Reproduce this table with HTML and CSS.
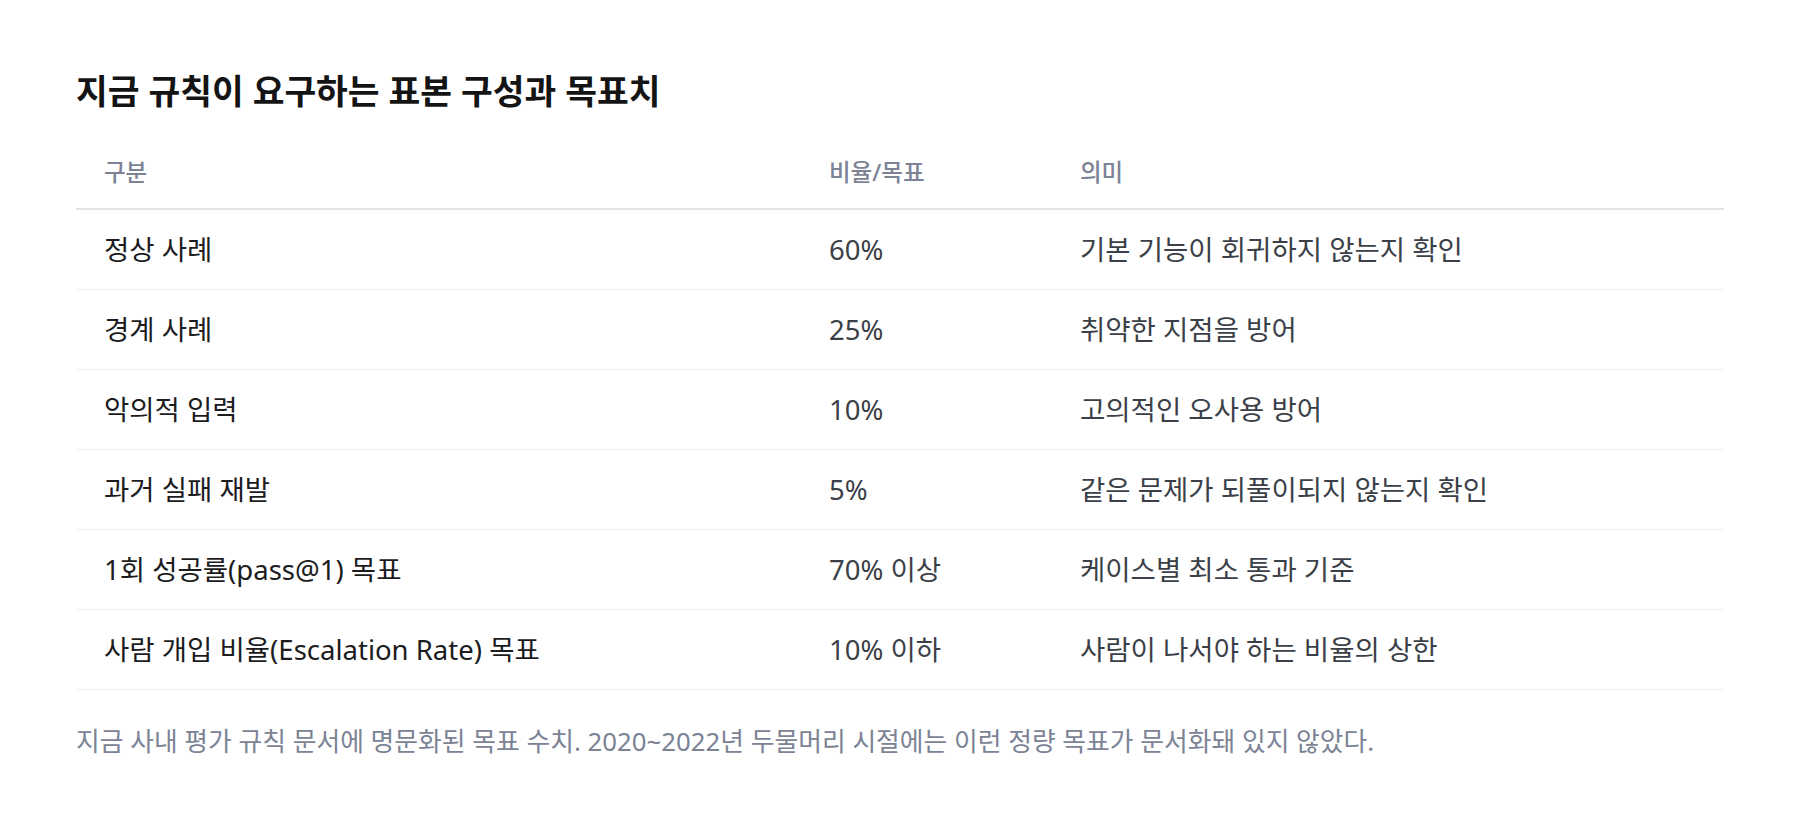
FILE: index.html
```html
<!DOCTYPE html>
<html lang="ko">
<head>
    <meta charset="UTF-8">
    <title>표본 구성과 목표치</title>
    <link rel="stylesheet" href="styles.css">
</head>
<body>
<div class="section">

    <h2 class="section-title">지금 규칙이 요구하는 표본 구성과 목표치</h2>

    <table class="grid">
        <thead>
            <tr>
                <th class="col-kind">구분</th>
                <th class="col-rate">비율/목표</th>
                <th class="col-mean">의미</th>
            </tr>
        </thead>
        <tbody>
            <tr>
                <td class="kind">정상 사례</td>
                <td class="rate">60%</td>
                <td class="mean">기본 기능이 회귀하지 않는지 확인</td>
            </tr>
            <tr>
                <td class="kind">경계 사례</td>
                <td class="rate">25%</td>
                <td class="mean">취약한 지점을 방어</td>
            </tr>
            <tr>
                <td class="kind">악의적 입력</td>
                <td class="rate">10%</td>
                <td class="mean">고의적인 오사용 방어</td>
            </tr>
            <tr>
                <td class="kind">과거 실패 재발</td>
                <td class="rate">5%</td>
                <td class="mean">같은 문제가 되풀이되지 않는지 확인</td>
            </tr>
            <tr>
                <td class="kind">1회 성공률(pass@1) 목표</td>
                <td class="rate">70% 이상</td>
                <td class="mean">케이스별 최소 통과 기준</td>
            </tr>
            <tr>
                <td class="kind">사람 개입 비율(Escalation Rate) 목표</td>
                <td class="rate">10% 이하</td>
                <td class="mean">사람이 나서야 하는 비율의 상한</td>
            </tr>
        </tbody>
    </table>

    <p class="caption">지금 사내 평가 규칙 문서에 명문화된 목표 수치. 2020~2022년 두물머리 시절에는 이런 정량 목표가 문서화돼 있지 않았다.</p>

</div>
</body>
</html>
```

FILE: styles.css
```css
body
{
    margin: 0;
    background: #ffffff;
    color: #1c1c1e;
    font-family: "Noto Sans", "Noto Sans CJK KR", sans-serif;
}

.section
{
    padding: 70px 76px 40px 76px;
}

.section-title
{
    margin: 0 0 23px 0;
    font-size: 34.5px;
    line-height: 42px;
    font-weight: 700;
    color: #141414;
}

.grid
{
    width: 100%;
    border-collapse: collapse;
}

.grid th
{
    text-align: left;
    font-size: 23.5px;
    line-height: 34px;
    font-weight: 500;
    color: #7b8395;
    padding: 20px 28px 19px 28px;
    border-bottom: 2px solid #e2e6eb;
}

.grid td
{
    font-size: 27.5px;
    line-height: 40px;
    padding: 20px 28px 19px 28px;
    border-bottom: 1px solid #eceff3;
    vertical-align: middle;
}

.col-kind
{
    width: 669px;
}
.col-rate
{
    width: 195px;
}

td.kind
{
    color: #1c1c1e;
}
td.rate, td.mean
{
    color: #3b3f48;
}

.caption
{
    margin: 32px 0 0 0;
    font-size: 25.8px;
    line-height: 38px;
    color: #7b8395;
}
```
